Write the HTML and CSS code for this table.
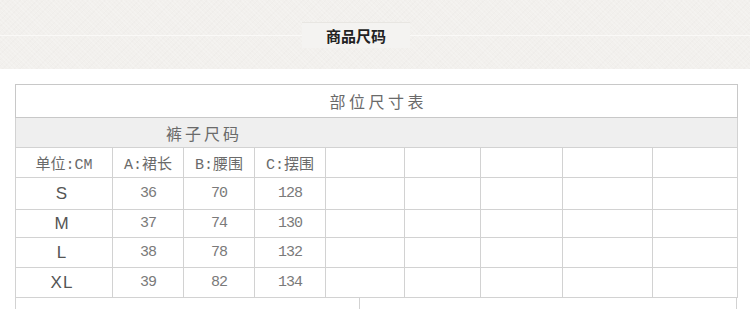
FILE: index.html
```html
<!DOCTYPE html>
<html lang="zh-CN">
<head>
<meta charset="utf-8">
<title>商品尺码</title>
<link rel="stylesheet" href="styles.css">
</head>
<body>
<header class="band">
  <div class="tab">商品尺码</div>
</header>

<section class="sheet">
  <table class="size-table">
    <colgroup>
      <col class="c1"><col class="c2"><col class="c3"><col class="c4"><col class="c5">
      <col class="c6"><col class="c7"><col class="c8"><col class="c9">
    </colgroup>
    <tr class="row-title">
      <td colspan="9">部位尺寸表</td>
    </tr>
    <tr class="row-group">
      <td colspan="9"><span class="group-name">裤子尺码</span></td>
    </tr>
    <tr class="row-head">
      <td>单位:CM</td>
      <td>A:裙长</td>
      <td>B:腰围</td>
      <td>C:摆围</td>
      <td></td><td></td><td></td><td></td><td></td>
    </tr>
    <tr class="row-data r-s">
      <td class="size">S</td><td class="num">36</td><td class="num">70</td><td class="num">128</td>
      <td></td><td></td><td></td><td></td><td></td>
    </tr>
    <tr class="row-data r-m">
      <td class="size">M</td><td class="num">37</td><td class="num">74</td><td class="num">130</td>
      <td></td><td></td><td></td><td></td><td></td>
    </tr>
    <tr class="row-data r-l">
      <td class="size">L</td><td class="num">38</td><td class="num">78</td><td class="num">132</td>
      <td></td><td></td><td></td><td></td><td></td>
    </tr>
    <tr class="row-data r-xl">
      <td class="size">XL</td><td class="num">39</td><td class="num">82</td><td class="num">134</td>
      <td></td><td></td><td></td><td></td><td></td>
    </tr>
  </table>
  <div class="foot">
    <div class="foot-cell foot-left"></div>
    <div class="foot-cell foot-right"></div>
  </div>
</section>
</body>
</html>
```

FILE: styles.css
```css
html, body {
  margin: 0;
  padding: 0;
  background: #ffffff;
}

body {
  font-family: "Noto Sans CJK SC", "Liberation Sans", sans-serif;
  color: #666;
  overflow: hidden;
}

/* textured top band with a thin rule running behind the tab */
.band {
  height: 69px;
  display: flex;
  justify-content: flex-start;
  align-items: flex-start;
  padding-left: 302px;
  box-sizing: border-box;
  background-color: #f2f0ed;
  background-image:
    linear-gradient(to bottom, transparent 35px, #faf9f7 35px, #faf9f7 36px, transparent 36px),
    repeating-linear-gradient(45deg, rgba(255,255,255,0.18) 0 1px, transparent 1px 3px),
    repeating-linear-gradient(-45deg, rgba(0,0,0,0.012) 0 1px, transparent 1px 4px);
}

.tab {
  margin-top: 22px;
  width: 108px;
  height: 26px;
  box-sizing: border-box;
  border-top: 1px solid #e8e6e2;
  background: #f4f3f1;
  text-align: center;
  font-size: 15px;
  font-weight: bold;
  line-height: 25px;
  color: #222;
}

.sheet {
  padding: 15px 13px 0 15px;
}

.size-table {
  border-collapse: collapse;
  table-layout: fixed;
  width: 722px;
}

.c1 { width: 97px; }
.c2 { width: 71px; }
.c3 { width: 71px; }
.c4 { width: 71px; }
.c5 { width: 79px; }
.c6 { width: 76px; }
.c7 { width: 82px; }
.c8 { width: 90px; }
.c9 { width: 85px; }

.size-table td {
  border: 1px solid #d2d2d2;
  padding: 0;
  text-align: center;
  vertical-align: middle;
  font-size: 16px;
  color: #6a6a6a;
  white-space: nowrap;
}

.row-title td {
  height: 32px;
  border-color: #c8c8c8;
  letter-spacing: 3.5px;
  text-indent: 3.5px;
}

.row-group td {
  height: 29px;
  background: #efefef;
  text-align: left;
  padding-left: 150px;
}

.group-name {
  letter-spacing: 3px;
}

.row-head td {
  height: 29px;
  font-family: "Liberation Mono", "Noto Sans CJK SC", monospace;
  font-size: 15px;
}

.r-s td { height: 31px; }
.r-m td { height: 27px; }
.r-l td { height: 29px; }
.r-xl td { height: 29px; }

.size-table td.size {
  font-family: "Liberation Sans", Arial, sans-serif;
  font-size: 17px;
  color: #555;
  letter-spacing: 1px;
  text-indent: -4px;
}

.size-table td.num {
  font-family: "Liberation Mono", monospace;
  font-size: 15px;
  letter-spacing: -1px;
  color: #7a7a7a;
}

/* last row splits at its own place, not on the column grid */
.foot {
  display: flex;
  width: 722px;
  height: 30px;
}

.foot-cell {
  box-sizing: border-box;
  height: 100%;
  border-left: 1px solid #d2d2d2;
}

.foot-left {
  width: 344px;
}

.foot-right {
  width: 378px;
  border-right: 1px solid #d2d2d2;
}
```
